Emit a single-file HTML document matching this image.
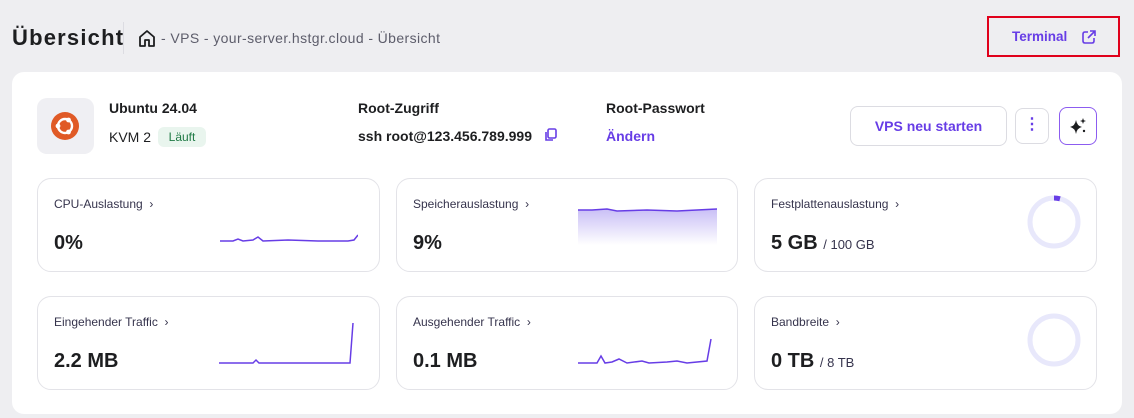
<!DOCTYPE html>
<html><head><meta charset="utf-8"><style>
*{box-sizing:border-box;margin:0;padding:0}
body{width:1134px;height:418px;background:#eeeef1;font-family:"Liberation Sans",sans-serif;color:#1d1e20;position:relative;overflow:hidden}
.abs{position:absolute}
.card{position:absolute;background:#fff;border:1px solid #e3e3e8;border-radius:14px}
.lbl{position:absolute;left:16px;top:18px;font-size:12px;color:#36344d}
.val{position:absolute;left:16px;top:53px;font-size:20px;font-weight:bold;color:#1d1e20}
.val span{font-size:13px;font-weight:normal;color:#36344d}
</style></head><body>
<div class="abs" style="left:12px;top:25px;font-size:22px;font-weight:bold;letter-spacing:1.2px">Übersicht</div>
<div class="abs" style="left:123px;top:22px;width:1px;height:32px;background:#dcdce2"></div>
<svg class="abs" style="left:137px;top:28px" width="20" height="20" viewBox="0 0 20 20"><path d="M3 9 L10 3 L17 9 V18 H12 V12 H8 V18 H3 Z" fill="none" stroke="#1d1e20" stroke-width="1.8" stroke-linejoin="round"/></svg>
<div class="abs" style="left:161px;top:30px;font-size:14px;color:#5d5d6b;letter-spacing:0.4px">- VPS - your-server.hstgr.cloud - Übersicht</div>
<div class="abs" style="left:987px;top:16px;width:133px;height:41px;border:2px solid #e0001b"></div>
<div class="abs" style="left:1012px;top:29px;font-size:13.5px;font-weight:bold;color:#673de6">Terminal</div>
<svg class="abs" style="left:1081px;top:29px" width="16" height="16" viewBox="0 0 16 16"><path d="M7 3H4Q2 3 2 5V12Q2 14 4 14H11Q13 14 13 12V9M9 2H14V7M14 2L7 9" fill="none" stroke="#673de6" stroke-width="1.6"/></svg>

<div class="abs" style="left:12px;top:72px;width:1110px;height:342px;background:#fff;border-radius:12px"></div>
<div class="abs" style="left:37px;top:98px;width:57px;height:56px;background:#efeff3;border-radius:10px"></div>
<svg class="abs" style="left:49px;top:110px" width="32" height="32" viewBox="0 0 32 32"><circle cx="16" cy="16" r="14" fill="#e05a26"/><circle cx="16" cy="16" r="7" fill="none" stroke="#fff" stroke-width="2.4"/><circle cx="9" cy="16" r="2.4" fill="#fff"/><circle cx="19.5" cy="10" r="2.4" fill="#fff"/><circle cx="19.5" cy="22" r="2.4" fill="#fff"/></svg>
<div class="abs" style="left:109px;top:100px;font-size:14px;font-weight:bold">Ubuntu 24.04</div>
<div class="abs" style="left:109px;top:129px;font-size:14px">KVM 2</div>
<div class="abs" style="left:158px;top:127px;width:48px;height:20px;background:#e9f5ee;border-radius:6px;font-size:12px;color:#1f7a45;text-align:center;line-height:20px">Läuft</div>
<div class="abs" style="left:358px;top:100px;font-size:14px;font-weight:bold">Root-Zugriff</div>
<div class="abs" style="left:358px;top:128px;font-size:14px;font-weight:bold">ssh root@123.456.789.999</div>
<svg class="abs" style="left:544px;top:128px" width="14" height="14" viewBox="0 0 14 14"><rect x="4" y="1" width="8" height="9" rx="1.5" fill="none" stroke="#673de6" stroke-width="1.6"/><path d="M2 4V12H9" fill="none" stroke="#673de6" stroke-width="1.6"/></svg>
<div class="abs" style="left:606px;top:100px;font-size:14px;font-weight:bold">Root-Passwort</div>
<div class="abs" style="left:606px;top:128px;font-size:14px;font-weight:bold;color:#673de6">Ändern</div>
<div class="abs" style="left:850px;top:106px;width:157px;height:40px;border:1px solid #dcdce2;border-radius:8px;font-size:14px;font-weight:bold;color:#673de6;text-align:center;line-height:38px">VPS neu starten</div>
<div class="abs" style="left:1015px;top:108px;width:34px;height:36px;border:1px solid #dcdce2;border-radius:8px;text-align:center;color:#673de6;font-weight:bold;font-size:16px;line-height:32px">⋮</div>
<div class="abs" style="left:1059px;top:107px;width:38px;height:38px;border:1.5px solid #8c5cf0;border-radius:8px"></div>
<svg class="abs" style="left:1068px;top:116px" width="20" height="20" viewBox="0 0 20 20"><path d="M8 4 Q9 10 14 11 Q9 12 8 18 Q7 12 2 11 Q7 10 8 4Z" fill="#1d1e20"/><path d="M15 2 L15.8 4.2 L18 5 L15.8 5.8 L15 8 L14.2 5.8 L12 5 L14.2 4.2Z" fill="#1d1e20"/><circle cx="16" cy="15" r="1.2" fill="#1d1e20"/></svg>

<div class="card" style="left:37px;top:178px;width:343px;height:94px"><div class="lbl">CPU-Auslastung &nbsp;›</div><div class="val">0%</div>
<svg class="abs" style="left:180px;top:50px" width="140" height="20"><polyline points="2,12 15,12 20,10 25,12 35,11 40,8 45,12 70,11 100,12 130,12 136,11 140,6" fill="none" stroke="#673de6" stroke-width="1.5"/></svg></div>
<div class="card" style="left:396px;top:178px;width:342px;height:94px"><div class="lbl">Speicherauslastung &nbsp;›</div><div class="val">9%</div>
<svg class="abs" style="left:180px;top:26px" width="142" height="40"><defs><linearGradient id="g" x1="0" y1="0" x2="0" y2="1"><stop offset="0" stop-color="#c9bff6"/><stop offset="1" stop-color="#fff"/></linearGradient></defs><path d="M1,5 L15,5 L30,4 L40,6 L70,5 L100,6 L140,4 L140,40 L1,40Z" fill="url(#g)"/><polyline points="1,5 15,5 30,4 40,6 70,5 100,6 140,4" fill="none" stroke="#673de6" stroke-width="1.5"/></svg></div>
<div class="card" style="left:754px;top:178px;width:343px;height:94px"><div class="lbl">Festplattenauslastung &nbsp;›</div><div class="val">5 GB <span>/ 100 GB</span></div>
<svg class="abs" style="left:270px;top:14px" width="58" height="58"><circle cx="29" cy="29" r="24" fill="none" stroke="#e8e8fb" stroke-width="5"/><path d="M29 5 A24 24 0 0 1 35 5.8" fill="none" stroke="#673de6" stroke-width="5"/></svg></div>

<div class="card" style="left:37px;top:296px;width:343px;height:94px"><div class="lbl">Eingehender Traffic &nbsp;›</div><div class="val">2.2 MB</div>
<svg class="abs" style="left:180px;top:24px" width="142" height="44"><polyline points="1,42 35,42 38,39 41,42 132,42 135,2" fill="none" stroke="#673de6" stroke-width="1.5"/></svg></div>
<div class="card" style="left:396px;top:296px;width:342px;height:94px"><div class="lbl">Ausgehender Traffic &nbsp;›</div><div class="val">0.1 MB</div>
<svg class="abs" style="left:180px;top:40px" width="142" height="28"><polyline points="1,26 20,26 24,19 28,26 35,25 42,22 50,26 65,24 72,26 90,25 100,24 110,26 130,24 134,2" fill="none" stroke="#673de6" stroke-width="1.5"/></svg></div>
<div class="card" style="left:754px;top:296px;width:343px;height:94px"><div class="lbl">Bandbreite &nbsp;›</div><div class="val">0 TB <span>/ 8 TB</span></div>
<svg class="abs" style="left:270px;top:14px" width="58" height="58"><circle cx="29" cy="29" r="24" fill="none" stroke="#e8e8fb" stroke-width="5"/></svg></div>
</body></html>
